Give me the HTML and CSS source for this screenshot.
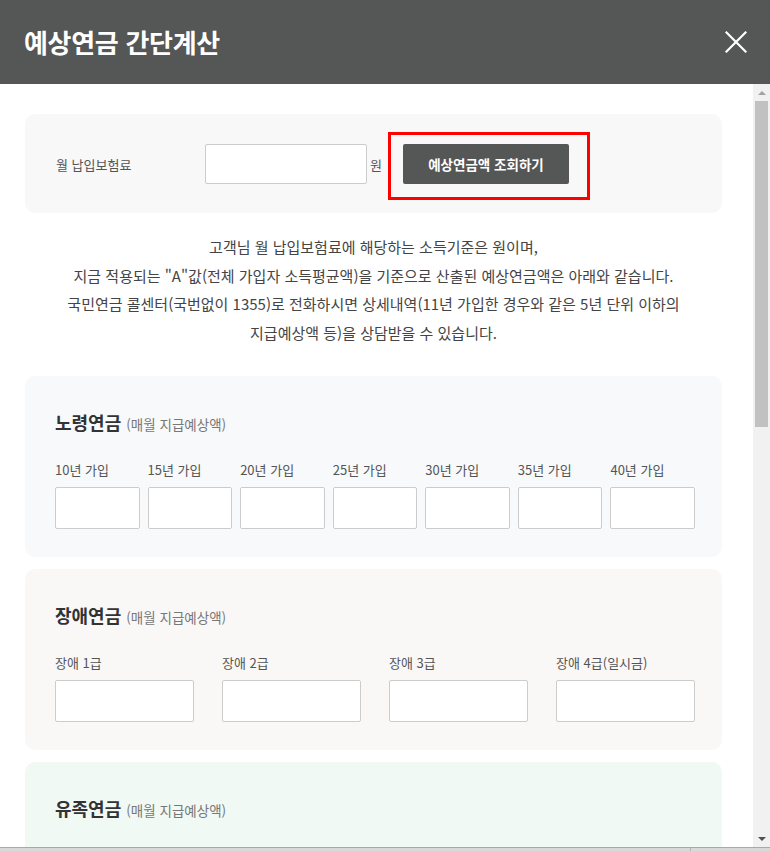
FILE: index.html
```html
<!DOCTYPE html>
<html lang="ko">
<head>
<meta charset="utf-8">
<title>예상연금 간단계산</title>
<link rel="stylesheet" href="styles.css">
</head>
<body>
<div class="popup">
  <header class="pop-head">
    <h1 class="pop-title">예상연금 간단계산</h1>
    <button class="btn-close" type="button" aria-label="닫기">
      <svg width="22" height="22" viewBox="0 0 22 22"><path d="M1.5 1.5 L20.5 20.5 M20.5 1.5 L1.5 20.5" stroke="#fff" stroke-width="2.2" fill="none" stroke-linecap="square"/></svg>
    </button>
  </header>
  <div class="pop-main">
    <div class="pop-body">
      <div class="inner">
        <section class="box box-input">
          <label class="lbl-money" for="money">월 납입보험료</label>
          <input class="inp-money" id="money" type="text">
          <span class="unit">원</span>
          <div class="btn-wrap"><button class="btn-calc" type="button">예상연금액 조회하기</button></div>
        </section>

        <p class="desc">고객님 월 납입보험료에 해당하는 소득기준은 원이며,<br>지금 적용되는 "A"값(전체 가입자 소득평균액)을 기준으로 산출된 예상연금액은 아래와 같습니다.<br>국민연금 콜센터(국번없이 1355)로 전화하시면 상세내역(11년 가입한 경우와 같은 5년 단위 이하의<br>지급예상액 등)을 상담받을 수 있습니다.</p>

        <section class="box box-old">
          <h2 class="box-title">노령연금 <small>(매월 지급예상액)</small></h2>
          <ul class="fields fields-7">
            <li><span class="f-lbl">10년 가입</span><input class="f-inp" type="text"></li>
            <li><span class="f-lbl">15년 가입</span><input class="f-inp" type="text"></li>
            <li><span class="f-lbl">20년 가입</span><input class="f-inp" type="text"></li>
            <li><span class="f-lbl">25년 가입</span><input class="f-inp" type="text"></li>
            <li><span class="f-lbl">30년 가입</span><input class="f-inp" type="text"></li>
            <li><span class="f-lbl">35년 가입</span><input class="f-inp" type="text"></li>
            <li><span class="f-lbl">40년 가입</span><input class="f-inp" type="text"></li>
          </ul>
        </section>

        <section class="box box-dis">
          <h2 class="box-title">장애연금 <small>(매월 지급예상액)</small></h2>
          <ul class="fields fields-4">
            <li><span class="f-lbl">장애 1급</span><input class="f-inp" type="text"></li>
            <li><span class="f-lbl">장애 2급</span><input class="f-inp" type="text"></li>
            <li><span class="f-lbl">장애 3급</span><input class="f-inp" type="text"></li>
            <li><span class="f-lbl">장애 4급(일시금)</span><input class="f-inp" type="text"></li>
          </ul>
        </section>

        <section class="box box-sur">
          <h2 class="box-title">유족연금 <small>(매월 지급예상액)</small></h2>
        </section>
      </div>
    </div>
    <div class="vscroll" aria-hidden="true">
      <span class="vs-btn vs-up"></span>
      <span class="vs-thumb"></span>
      <span class="vs-track"></span>
      <span class="vs-btn vs-down"></span>
    </div>
  </div>
  <div class="bottom-bar"><span class="bottom-split"></span></div>
</div>
</body>
</html>
```

FILE: styles.css
```css
* { box-sizing: border-box; }
html, body { margin: 0; padding: 0; }
body {
  width: 770px;
  height: 851px;
  overflow: hidden;
  background: #fff;
  font-family: "Noto Sans CJK KR", "Noto Sans KR", "Noto Sans", sans-serif;
  color: #444;
}
.popup { display: flex; flex-direction: column; height: 851px; }

.pop-head {
  flex: 0 0 84px;
  background: #555656;
  display: flex;
  align-items: center;
  justify-content: space-between;
  padding: 0 23px 0 24px;
}
.pop-title {
  margin: 0;
  color: #fff;
  font-size: 26px;
  font-weight: 700;
  line-height: 30px;
  letter-spacing: -0.3px;
}
.btn-close {
  width: 22px; height: 22px;
  padding: 0; border: 0; background: none;
  display: block;
}
.btn-close svg { display: block; }

.pop-main {
  flex: 0 0 763px;
  display: flex;
  min-height: 0;
}
.pop-body {
  flex: 1 1 auto;
  overflow: hidden;
}

.vscroll {
  flex: 0 0 17px;
  background: #f1f1f1;
  display: flex;
  flex-direction: column;
}
.vs-btn {
  flex: 0 0 17px;
  display: flex;
  align-items: center;
  justify-content: center;
}
.vs-btn::before {
  content: "";
  width: 0; height: 0;
  border-left: 4px solid transparent;
  border-right: 4px solid transparent;
}
.vs-up::before { border-bottom: 4px solid #a3a3a3; }
.vs-down::before { border-top: 4px solid #505050; }
.vs-thumb {
  flex: 0 0 326px;
  margin: 0 2px;
  background: #c1c1c1;
}
.vs-track { flex: 1 1 auto; }

.inner { padding: 30px 31px 0 25px; }

.box { border-radius: 10px; }

.box-input {
  background: #f8f8f8;
  display: flex;
  align-items: center;
  padding: 30px 30px 29px;
}
.lbl-money {
  width: 150px;
  font-size: 13px;
  color: #555;
  padding-left: 1px;
}
.inp-money {
  width: 162px;
  height: 40px;
  border: 1px solid #ccc;
  border-radius: 2px;
  background: #fff;
  margin: 0;
}
.unit { margin-left: 3px; font-size: 13px; color: #555; }
.btn-wrap { position: relative; margin-left: 21px; }
.btn-wrap::after {
  content: "";
  position: absolute;
  left: -15px; top: -12px; right: -21px; bottom: -16px;
  border: 3px solid #ff0000;
  pointer-events: none;
}
.btn-calc {
  display: block;
  width: 166px;
  height: 40px;
  border: 0;
  border-radius: 2px;
  background: #555656;
  color: #fff;
  font-family: inherit;
  font-size: 13.5px;
  font-weight: 700;
}

.desc {
  margin: 20px 0 29px;
  text-align: center;
  font-size: 15px;
  line-height: 28.5px;
  color: #444;
}

.box-old, .box-dis, .box-sur {
  padding: 34px 27px 28px 30px;
  margin-bottom: 12px;
}
.box-old { background: #f7f9fb; }
.box-dis { background: #faf8f7; }
.box-sur { background: #f0f9f4; min-height: 181px; }

.box-title {
  margin: 0 0 24px;
  font-size: 18px;
  font-weight: 700;
  line-height: 24px;
  color: #333;
}
.box-title small {
  font-size: 13.5px;
  font-weight: 400;
  color: #777;
}

.fields {
  list-style: none;
  margin: 0; padding: 0;
  display: grid;
  gap: 8px;
}
.fields-7 { grid-template-columns: repeat(7, 1fr); }
.fields-4 { grid-template-columns: repeat(4, 1fr); column-gap: 28px; }
.fields li { display: flex; flex-direction: column; min-width: 0; }
.f-lbl {
  font-size: 13px;
  line-height: 20px;
  color: #555;
  margin-bottom: 7px;
  white-space: nowrap;
}
.f-inp {
  width: 100%;
  height: 42px;
  margin: 0;
  border: 1px solid #ccc;
  border-radius: 2px;
  background: #fff;
}

.bottom-bar {
  flex: 0 0 4px;
  border-top: 1px solid #a9a9a9;
  background: #d9d9d9;
  position: relative;
}
.bottom-split {
  position: absolute;
  left: 690px; top: 0; bottom: 0;
  width: 1px;
  background: #b5b5b5;
}
```
